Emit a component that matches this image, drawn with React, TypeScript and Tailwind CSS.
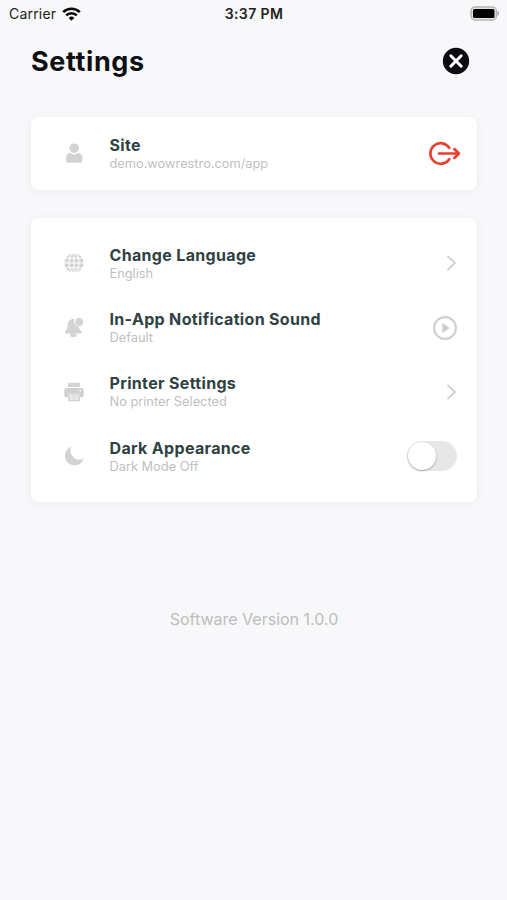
import type { ReactNode } from "react";

function WifiIcon() {
  return (
    <svg width="19" height="14" viewBox="0 0 19 14" fill="none" stroke="#080808" strokeWidth="2.5">
      <path d="M1.2 5.1a11.8 11.8 0 0 1 16.6 0" />
      <path d="M4.2 8.4a7.5 7.5 0 0 1 10.6 0" />
      <path d="M9.5 13.8l-2.8-2.9a4 4 0 0 1 5.6 0z" fill="#080808" stroke="none" />
    </svg>
  );
}

function BatteryIcon() {
  return (
    <svg width="30" height="15" viewBox="0 0 30 15">
      <rect x="1" y="1" width="25.5" height="13" rx="4" fill="#e4e4e4" stroke="#b5b5b5" strokeWidth="1.5" />
      <rect x="3" y="3" width="21.5" height="9" rx="1.5" fill="#000" />
      <path d="M27.5 5.1c2.2.9 2.2 3.9 0 4.8z" fill="#a5a5a5" />
    </svg>
  );
}

function CloseIcon() {
  return (
    <svg width="28" height="28" viewBox="0 0 28 28">
      <circle cx="14" cy="14" r="13.2" fill="#0b0d10" />
      <path d="M8.8 8.8l10.4 10.4M19.2 8.8L8.8 19.2" stroke="#fff" strokeWidth="3" strokeLinecap="round" />
    </svg>
  );
}

function UserIcon() {
  return (
    <svg width="20" height="20" viewBox="0 0 20 20" fill="#d3d3d3">
      <circle cx="10.3" cy="5.2" r="4.8" />
      <path d="M5.8 9.8a6.600 6.600 0 0 0 9 0c2.300.5 3.700 2.500 3.700 5v3c0 1.100-.8 1.900-1.900 1.900H4c-1.100 0-1.900-.8-1.900-1.900v-3c0-2.500 1.400-4.500 3.700-5z" />
    </svg>
  );
}

function GlobeIcon() {
  return (
    <svg width="20" height="20" viewBox="0 0 20 20">
      <circle cx="10" cy="10" r="9.7" fill="#d3d3d3" />
      <g fill="none" stroke="#fff" strokeWidth="1.1">
        <path d="M10 0v20M0 10h20M1 5.2h18M1 14.8h18" />
        <ellipse cx="10" cy="10" rx="5" ry="10" />
      </g>
    </svg>
  );
}

function BellIcon() {
  return (
    <svg width="20" height="20" viewBox="0 0 20 20" fill="#d3d3d3">
      <path d="M10.3 1.100c-3.800-.4-6.500 2-6.600 5.400-.1 3.900-.8 5.100-2.300 6.600-1 1-.5 2.500.9 2.500h13.900c1.400 0 1.900-1.500.9-2.500-1.200-1.200-1.900-2.200-2.200-4.400-3.500-.3-5.700-3.800-4.600-7.600z" />
      <circle cx="15.2" cy="4" r="3.9" />
      <path d="M6 15.500h6.500v.5a3.250 3.250 0 0 1-6.500 0z" />
    </svg>
  );
}

function PrinterIcon() {
  return (
    <svg width="20" height="20" viewBox="0 0 20 20">
      <path d="M4 5V2.200C4 1.300 4.700.7 5.600.7h8.800c.9 0 1.600.6 1.600 1.500V5z" fill="#d3d3d3" />
      <path d="M2.500 6h15c1.200 0 2.200 1 2.200 2.200v5c0 1.200-1 2.100-2.200 2.100H16V11H4v4.300H2.500c-1.200 0-2.200-.9-2.200-2.100v-5C.3 7 1.300 6 2.500 6z" fill="#d0d0d0" />
      <path d="M5 11.900h10v6.600H5z" fill="#f1f1f1" stroke="#d0d0d0" strokeWidth="1.500" />
      <path d="M7.300 14.200h5.400M7.300 16.200h5.400" stroke="#d0d0d0" />
      <circle cx="16.300" cy="8.600" r=".9" fill="#fff" />
    </svg>
  );
}

function MoonIcon() {
  return (
    <svg width="20" height="20" viewBox="0 0 20 20" fill="#d3d3d3">
      <path d="M7.600.6A9.600 9.600 0 1 0 19.700 12.600a8.900 8.900 0 0 1-12.100-12z" />
    </svg>
  );
}

function LogoutIcon() {
  return (
    <svg width="32" height="26" viewBox="0 0 32 26" fill="none" stroke="#e8402f" strokeWidth="2.7" strokeLinecap="round" strokeLinejoin="round">
      <path d="M20.3 7.8a10.3 10.3 0 1 0 0 11.4" />
      <path d="M10 13.5h20M25.3 9.1L30 13.5l-4.700 4.400" />
    </svg>
  );
}

function ChevronIcon() {
  return (
    <svg width="11" height="16" viewBox="0 0 11 16" fill="none" stroke="#cecece" strokeWidth="1.8">
      <path d="M1.5.9L9 8l-7.5 7.1" />
    </svg>
  );
}

function PlayIcon() {
  return (
    <svg width="24" height="24" viewBox="0 0 24 24">
      <circle cx="12" cy="12" r="10.9" fill="none" stroke="#d1d1d1" strokeWidth="2.2" />
      <path d="M9.3 6.7v10.6l7.4-5.3z" fill="#cfcfcf" />
    </svg>
  );
}

function Toggle() {
  return (
    <div className="flex h-[30px] w-[50px] items-center rounded-full bg-[#e7e7e7] px-px">
      <div className="size-7 rounded-full bg-white shadow-[0_1px_2px_rgba(0,0,0,0.3)]" />
    </div>
  );
}

type RowProps = {
  icon: ReactNode;
  title: string;
  subtitle: string;
  action: ReactNode;
};

function Row({ icon, title, subtitle, action }: RowProps) {
  return (
    <div className="flex h-[64.4px] items-center pl-[33px] pr-5">
      <div className="w-[45.5px] shrink-0">{icon}</div>
      <div className="flex-1 pt-px">
        <div className="text-[16px] leading-[19px] font-bold tracking-[0.33px] text-[#2f4143]">{title}</div>
        <div className="text-[12.8px] leading-[17px] text-[#bfbfbf]">{subtitle}</div>
      </div>
      {action}
    </div>
  );
}

export default function App() {
  return (
    <div className="min-h-[900px] w-full bg-[#f8f8fa] font-['Inter',sans-serif]">
      <div className="grid h-[27px] grid-cols-3 items-center pl-[9px] pr-[7px] text-[14px] text-[#222]">
        <div className="flex items-center gap-[6px]">
          <span className="tracking-[0.2px]">Carrier</span>
          <WifiIcon />
        </div>
        <span className="pr-px text-center font-semibold tracking-[0.4px]">3:37 PM</span>
        <div className="flex justify-end">
          <BatteryIcon />
        </div>
      </div>

      <div className="flex h-[68px] items-center justify-between pl-[31px] pr-[37px]">
        <h1 className="pt-[2px] text-[27px] leading-8 font-bold tracking-[0.6px] text-[#0d0f12]">Settings</h1>
        <CloseIcon />
      </div>

      <div className="mr-[30px] mt-[22px] ml-[31px] flex flex-col gap-7">
        <div className="flex h-[73px] flex-col justify-center rounded-[8px] bg-white shadow-[0_1px_10px_rgba(0,0,0,0.05)]">
          <Row
            icon={<UserIcon />}
            title="Site"
            subtitle="demo.wowrestro.com/app"
            action={<div className="-mr-1"><LogoutIcon /></div>}
          />
        </div>

        <div className="rounded-[8px] bg-white py-[13px] shadow-[0_1px_10px_rgba(0,0,0,0.05)]">
          <Row icon={<GlobeIcon />} title="Change Language" subtitle="English" action={<ChevronIcon />} />
          <Row icon={<BellIcon />} title="In-App Notification Sound" subtitle="Default" action={<PlayIcon />} />
          <Row icon={<PrinterIcon />} title="Printer Settings" subtitle="No printer Selected" action={<ChevronIcon />} />
          <Row icon={<MoonIcon />} title="Dark Appearance" subtitle="Dark Mode Off" action={<Toggle />} />
        </div>
      </div>

      <p className="mt-[105.5px] pl-px text-center text-[16px] leading-6 text-[#bdbdbd]">Software Version 1.0.0</p>
    </div>
  );
}
